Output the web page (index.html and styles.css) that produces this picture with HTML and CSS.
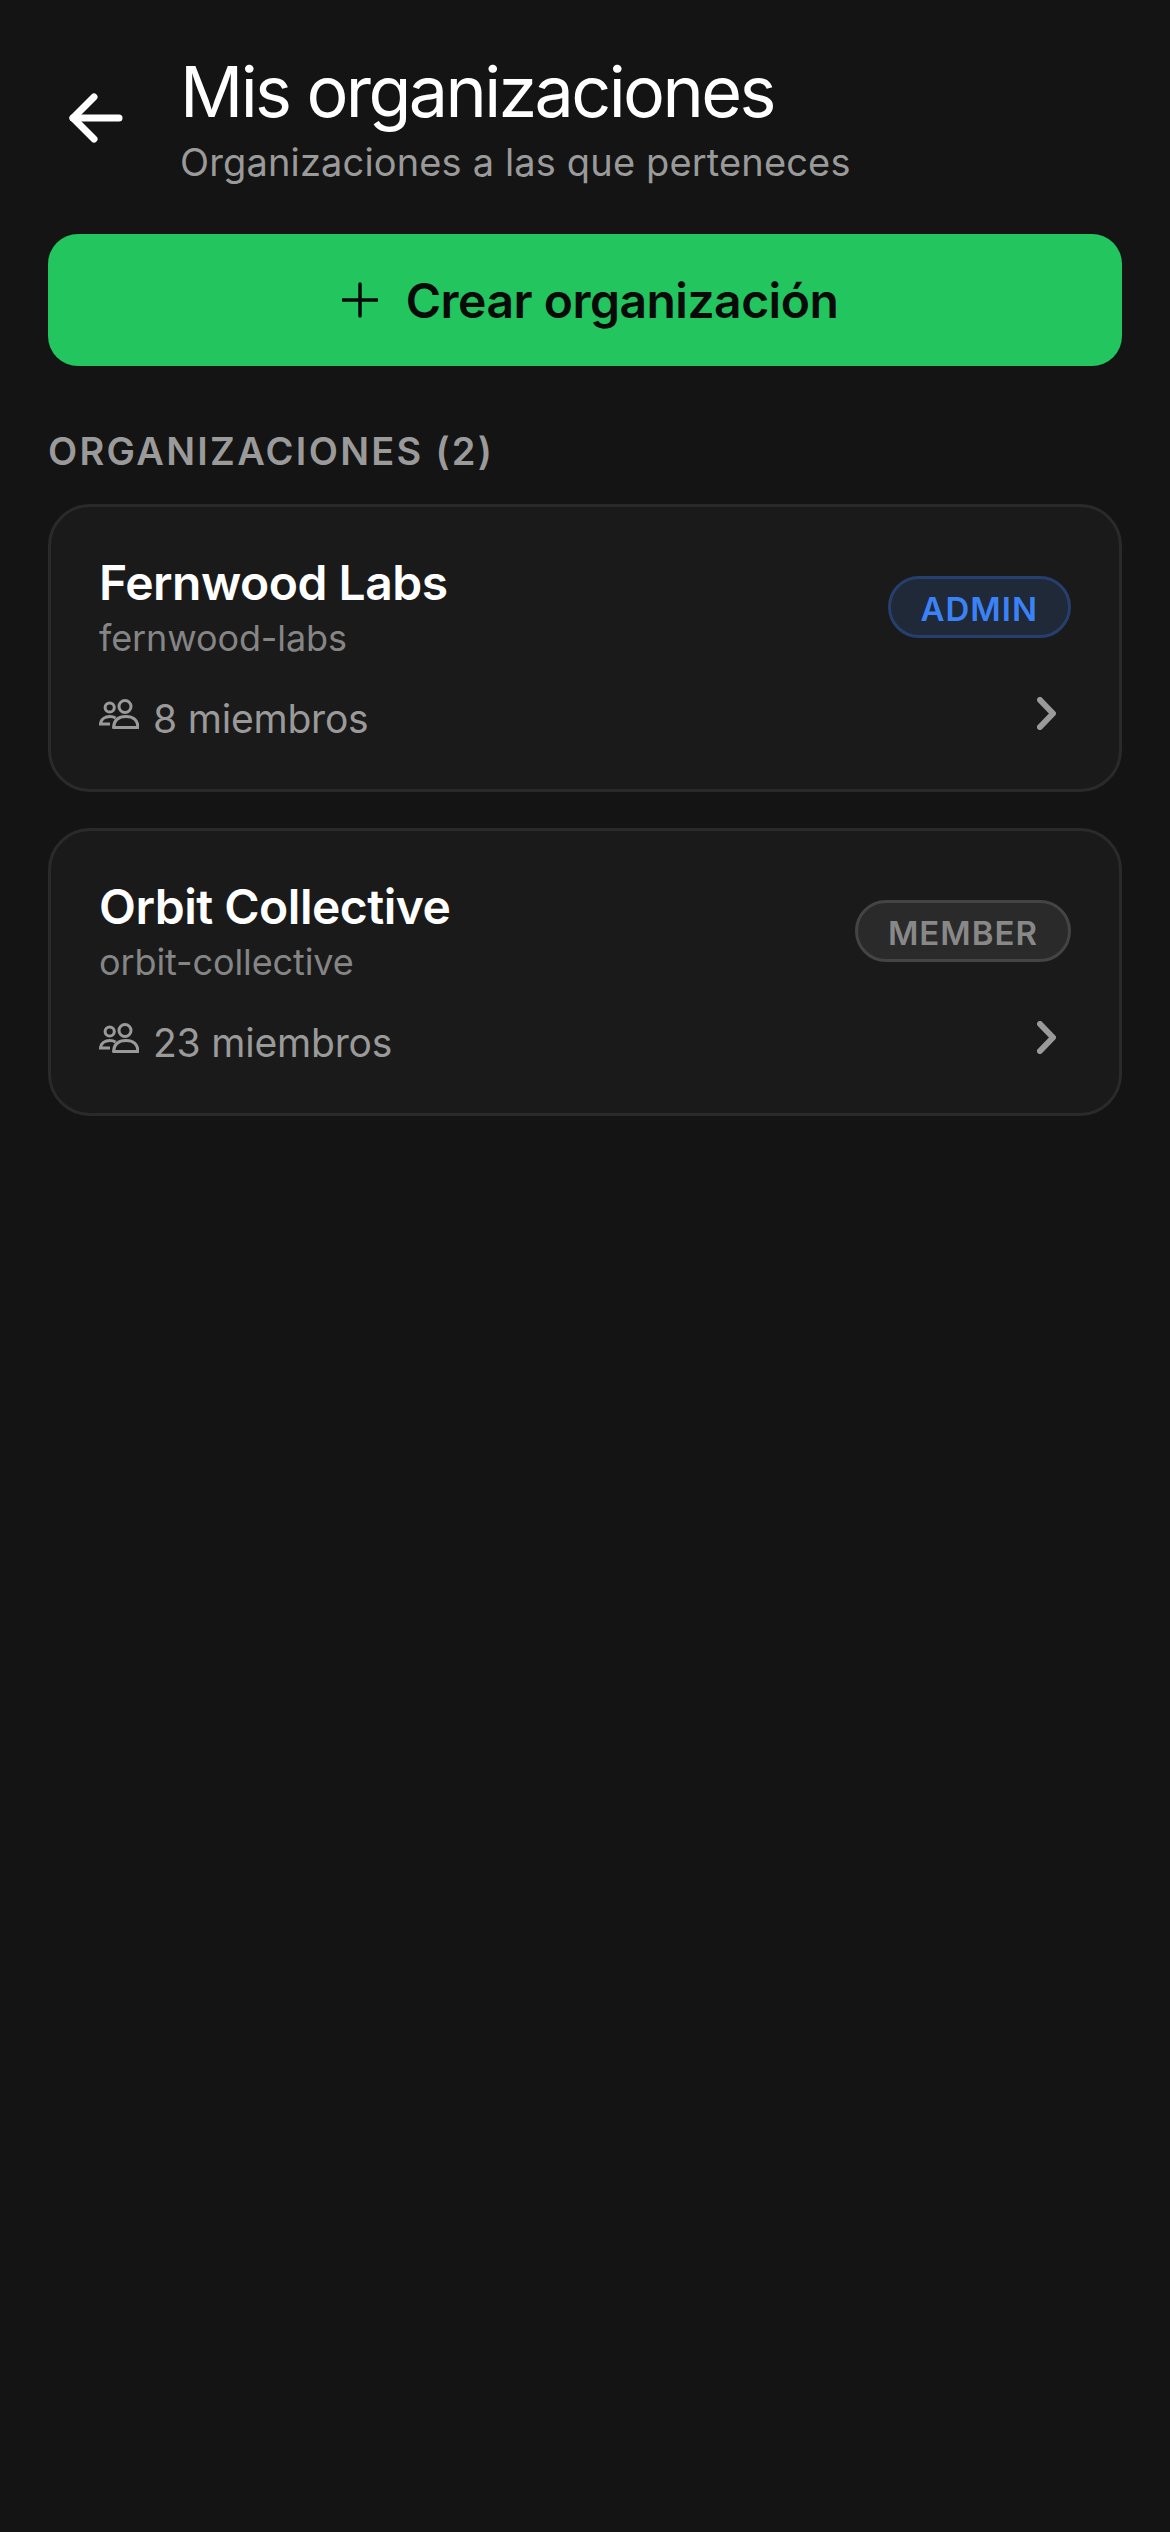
FILE: index.html
```html
<!DOCTYPE html>
<html lang="es">

<head>
    <meta charset="UTF-8">
    <meta name="viewport" content="width=device-width, initial-scale=1.0">
    <title>Mis organizaciones</title>
    <link rel="stylesheet" href="styles.css">
</head>

<body>
    <header class="top">
        <svg class="back" width="54" height="50" viewBox="0 0 54 50" fill="none" stroke="#fff" stroke-width="7" stroke-linecap="round" stroke-linejoin="round">
            <path d="M50 25H4"></path>
            <path d="M25 4L4 25L25 46"></path>
        </svg>
        <div>
            <h1>Mis organizaciones</h1>
            <p class="sub">Organizaciones a las que perteneces</p>
        </div>
    </header>

    <button class="create">
        <svg width="36" height="36" viewBox="0 0 36 36" fill="none" stroke="#0a0a0a" stroke-width="3.5" stroke-linecap="round">
            <path d="M18 2V34"></path>
            <path d="M1 18H35"></path>
        </svg>
        Crear organización
    </button>

    <h2 class="label">ORGANIZACIONES (2)</h2>

    <section class="card">
        <div class="row">
            <div>
                <div class="name">Fernwood Labs</div>
                <div class="slug">fernwood-labs</div>
            </div>
            <span class="badge admin">ADMIN</span>
        </div>
        <div class="row foot">
            <div class="members">
                <svg width="40" height="32" viewBox="0 0 40 32" fill="none" stroke="#9a9a9a" stroke-width="3">
                    <circle cx="10.7" cy="8.5" r="4.6"></circle>
                    <circle cx="26" cy="7.5" r="6"></circle>
                    <path d="M14.5 28.5C15 21 20 17.5 27 17.5C34 17.5 39 21 39 28.5Z" stroke-linejoin="round"></path>
                    <path d="M11 25H1.5C2 20 6 17.5 11 17.5C13 17.5 15 18 16.5 19"></path>
                </svg>
                8 miembros
            </div>
            <svg class="chev" width="19" height="33" viewBox="0 0 19 33" fill="none" stroke="#9a9a9a" stroke-width="6" stroke-linecap="round" stroke-linejoin="round">
                <path d="M3 3L16 16.5L3 30"></path>
            </svg>
        </div>
    </section>

    <section class="card">
        <div class="row">
            <div>
                <div class="name">Orbit Collective</div>
                <div class="slug">orbit-collective</div>
            </div>
            <span class="badge member">MEMBER</span>
        </div>
        <div class="row foot">
            <div class="members">
                <svg width="40" height="32" viewBox="0 0 40 32" fill="none" stroke="#9a9a9a" stroke-width="3">
                    <circle cx="10.7" cy="8.5" r="4.6"></circle>
                    <circle cx="26" cy="7.5" r="6"></circle>
                    <path d="M14.5 28.5C15 21 20 17.5 27 17.5C34 17.5 39 21 39 28.5Z" stroke-linejoin="round"></path>
                    <path d="M11 25H1.5C2 20 6 17.5 11 17.5C13 17.5 15 18 16.5 19"></path>
                </svg>
                23 miembros
            </div>
            <svg class="chev" width="19" height="33" viewBox="0 0 19 33" fill="none" stroke="#9a9a9a" stroke-width="6" stroke-linecap="round" stroke-linejoin="round">
                <path d="M3 3L16 16.5L3 30"></path>
            </svg>
        </div>
    </section>
</body>

</html>
```

FILE: styles.css
```css
body {
    margin: 0;
    min-height: 2532px;
    box-sizing: border-box;
    padding: 50px 48px 0;
    background-color: #141414;
    color: #fff;
    font-family: Inter, "Liberation Sans", sans-serif;
}

.top {
    display: flex;
    align-items: center;
    gap: 57px;
    padding-left: 21px;
}

.back {
    flex: none;
    margin-top: 2px;
}

h1 {
    margin: 0;
    font-size: 70px;
    font-weight: 400;
    line-height: 84px;
    letter-spacing: -2.6px;
}

.sub {
    margin: 6px 0 0;
    font-size: 38px;
    line-height: 44px;
    letter-spacing: 0.15px;
    color: #9a9a9a;
}

.create {
    display: flex;
    align-items: center;
    justify-content: center;
    gap: 28px;
    width: 100%;
    height: 132px;
    margin-top: 50px;
    padding: 0 0 0 10px;
    border: 0;
    border-radius: 30px;
    background-color: #22c55e;
    color: #0a0a0a;
    font-family: inherit;
    font-size: 48px;
    font-weight: 600;
    letter-spacing: -0.5px;
}

.label {
    margin: 63px 0 31px;
    font-size: 38px;
    font-weight: 600;
    line-height: 44px;
    letter-spacing: 0.06em;
    color: #9a9a9a;
}

.card {
    box-sizing: border-box;
    height: 288px;
    margin-bottom: 36px;
    padding: 49px 48px 48px;
    border: 3px solid #2a2a2a;
    border-radius: 42px;
    background-color: #1a1a1a;
}

.row {
    display: flex;
    justify-content: space-between;
    align-items: flex-start;
}

.foot {
    align-items: center;
    margin-top: 33px;
}

.name {
    font-size: 48px;
    font-weight: 600;
    line-height: 54px;
    letter-spacing: -0.5px;
}

.slug {
    margin-top: 5px;
    font-size: 36px;
    line-height: 46px;
    letter-spacing: -0.1px;
    color: #858585;
}

.badge {
    box-sizing: border-box;
    height: 62px;
    margin-top: 20px;
    padding: 3px 30px 0;
    border: 3px solid;
    border-radius: 31px;
    font-size: 33px;
    font-weight: 600;
    line-height: 54px;
    letter-spacing: 1px;
}

.admin {
    border-color: #263f6e;
    background-color: #1f2937;
    color: #3b82f6;
}

.member {
    border-color: #444;
    background-color: #2a2a2a;
    color: #888;
}

.members {
    display: flex;
    align-items: center;
    gap: 14px;
    font-size: 39px;
    line-height: 50px;
    letter-spacing: -0.2px;
    color: #9a9a9a;
}

.members svg {
    margin-top: -8px;
}

.chev {
    margin-right: 15px;
    margin-top: -12px;
}
```
